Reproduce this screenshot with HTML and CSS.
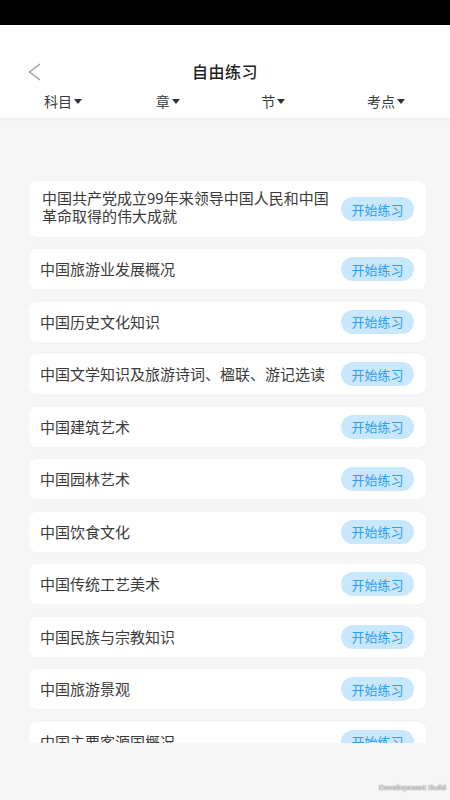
FILE: index.html
```html
<!DOCTYPE html>
<html lang="zh-CN">
<head>
    <meta charset="UTF-8">
    <meta name="viewport" content="width=device-width, initial-scale=1.0">
    <title>自由练习</title>
    <link rel="stylesheet" href="styles.css">
</head>
<body>
    <div class="status-bar"></div>

    <header class="nav">
        <div class="title-row">
            <div class="back">
                <svg width="13" height="18" viewBox="0 0 13 18">
                    <polyline points="12,1 1.5,9 12,17" fill="none" stroke="#9a9a9a" stroke-width="1.3"/>
                </svg>
            </div>
            <h1 class="title">自由练习</h1>
            <div></div>
        </div>
        <div class="filters">
            <span class="filter">科目<i class="caret"></i></span>
            <span class="filter">章<i class="caret"></i></span>
            <span class="filter">节<i class="caret"></i></span>
            <span class="filter">考点<i class="caret"></i></span>
        </div>
    </header>

    <section class="list">
        <div class="card card-tall">
            <p class="name">中国共产党成立99年来领导中国人民和中国革命取得的伟大成就</p>
            <button class="start">开始练习</button>
        </div>
        <div class="card">
            <p class="name">中国旅游业发展概况</p>
            <button class="start">开始练习</button>
        </div>
        <div class="card">
            <p class="name">中国历史文化知识</p>
            <button class="start">开始练习</button>
        </div>
        <div class="card">
            <p class="name">中国文学知识及旅游诗词、楹联、游记选读</p>
            <button class="start">开始练习</button>
        </div>
        <div class="card">
            <p class="name">中国建筑艺术</p>
            <button class="start">开始练习</button>
        </div>
        <div class="card">
            <p class="name">中国园林艺术</p>
            <button class="start">开始练习</button>
        </div>
        <div class="card">
            <p class="name">中国饮食文化</p>
            <button class="start">开始练习</button>
        </div>
        <div class="card">
            <p class="name">中国传统工艺美术</p>
            <button class="start">开始练习</button>
        </div>
        <div class="card">
            <p class="name">中国民族与宗教知识</p>
            <button class="start">开始练习</button>
        </div>
        <div class="card">
            <p class="name">中国旅游景观</p>
            <button class="start">开始练习</button>
        </div>
        <div class="card">
            <p class="name">中国主要客源国概况</p>
            <button class="start">开始练习</button>
        </div>
    </section>

    <div class="dev-badge">Development Build</div>
</body>
</html>
```

FILE: styles.css
```css
html, body {
    margin: 0;
    padding: 0;
}
body {
    width: 450px;
    height: 800px;
    overflow: hidden;
    background: #f6f6f6;
    font-family: "Noto Sans CJK SC", "Noto Sans", sans-serif;
    color: #333;
    position: relative;
}
.status-bar {
    height: 25px;
    background: #000;
}
.nav {
    background: #fff;
    padding-top: 25px;
    padding-bottom: 8px;
    box-shadow: 0 1px 3px rgba(0, 0, 0, 0.06);
}
.title-row {
    display: grid;
    grid-template-columns: 1fr auto 1fr;
    align-items: center;
    height: 42px;
}
.back {
    padding-left: 28px;
    display: flex;
    align-items: center;
    padding-top: 1px;
}
.title {
    margin: 0;
    font-size: 16px;
    font-weight: 500;
    color: #222;
    letter-spacing: 0.5px;
}
.filters {
    display: flex;
    justify-content: space-between;
    padding: 0 45px 0 44px;
    height: 18px;
    align-items: center;
}
.filter {
    font-size: 14px;
    color: #3a3a3a;
    display: flex;
    align-items: center;
    line-height: 18px;
}
.filter:nth-child(2) {
    margin-left: -8px;
}
.caret {
    width: 0;
    height: 0;
    margin-left: 2px;
    border-left: 4px solid transparent;
    border-right: 4px solid transparent;
    border-top: 5px solid #333;
}
.list {
    margin: 63px 24px 0 29px;
    height: 562px;
    overflow: hidden;
}
.card {
    background: #fff;
    border-radius: 8px;
    height: 40px;
    margin-bottom: 12.5px;
    padding: 0 12px 0 11px;
    display: flex;
    align-items: center;
    box-shadow: 0 0 4px rgba(0, 0, 0, 0.02);
}
.card-tall {
    height: 56px;
    margin-bottom: 12px;
}
.card-tall .name {
    padding: 0 12px 4px 2px;
    line-height: 18px;
}
.name {
    flex: 1;
    margin: 0;
    font-size: 15px;
    line-height: 20px;
    color: #3a3a3a;
    padding-right: 10px;
}
.start {
    width: 73px;
    height: 24px;
    border: none;
    border-radius: 12px;
    background: #c9e8fd;
    color: #2e9ef0;
    font-family: inherit;
    font-size: 13px;
    padding: 0;
    flex-shrink: 0;
    cursor: pointer;
}
.dev-badge {
    position: absolute;
    right: 4px;
    bottom: 8px;
    font-family: "DejaVu Sans", sans-serif;
    font-size: 7px;
    color: #fff;
    text-shadow: 0 0 1px #555, 0 0 1px #555;
}
```
